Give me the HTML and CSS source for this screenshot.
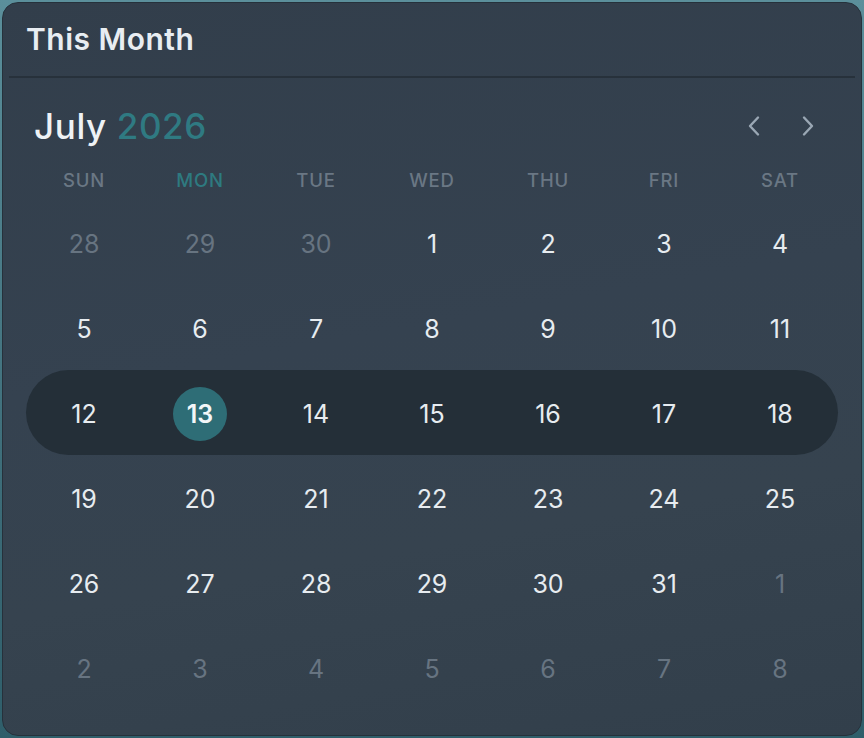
FILE: index.html
```html
<!DOCTYPE html>
<html lang="en">
<head>
<meta charset="utf-8">
<title>This Month</title>
<link rel="stylesheet" href="styles.css">
</head>
<body>
<div class="card">
  <header class="card-head">
    <h1 class="card-title">This Month</h1>
  </header>
  <div class="divider"></div>
  <section class="cal">
    <div class="cal-top">
      <h2 class="month">July <span class="year">2026</span></h2>
      <div class="nav">
        <button class="nav-btn" aria-label="Previous month">
          <svg width="18" height="22" viewBox="0 0 18 22"><path d="M13 2.5 L5 11 L13 19.5" fill="none" stroke="currentColor" stroke-width="2.4" stroke-linecap="round" stroke-linejoin="round"/></svg>
        </button>
        <button class="nav-btn" aria-label="Next month">
          <svg width="18" height="22" viewBox="0 0 18 22"><path d="M5 2.5 L13 11 L5 19.5" fill="none" stroke="currentColor" stroke-width="2.4" stroke-linecap="round" stroke-linejoin="round"/></svg>
        </button>
      </div>
    </div>
    <div class="weekdays">
      <span>SUN</span><span class="wd-active">MON</span><span>TUE</span><span>WED</span><span>THU</span><span>FRI</span><span>SAT</span>
    </div>
    <div class="week">
      <span class="day muted">28</span><span class="day muted">29</span><span class="day muted">30</span><span class="day">1</span><span class="day">2</span><span class="day">3</span><span class="day">4</span>
    </div>
    <div class="week">
      <span class="day">5</span><span class="day">6</span><span class="day">7</span><span class="day">8</span><span class="day">9</span><span class="day">10</span><span class="day">11</span>
    </div>
    <div class="week current">
      <span class="day">12</span><span class="day"><span class="today">13</span></span><span class="day">14</span><span class="day">15</span><span class="day">16</span><span class="day">17</span><span class="day">18</span>
    </div>
    <div class="week">
      <span class="day">19</span><span class="day">20</span><span class="day">21</span><span class="day">22</span><span class="day">23</span><span class="day">24</span><span class="day">25</span>
    </div>
    <div class="week">
      <span class="day">26</span><span class="day">27</span><span class="day">28</span><span class="day">29</span><span class="day">30</span><span class="day">31</span><span class="day muted">1</span>
    </div>
    <div class="week">
      <span class="day muted">2</span><span class="day muted">3</span><span class="day muted">4</span><span class="day muted">5</span><span class="day muted">6</span><span class="day muted">7</span><span class="day muted">8</span>
    </div>
  </section>
</div>
</body>
</html>
```

FILE: styles.css
```css
* { box-sizing: border-box; }

html, body {
  margin: 0;
  padding: 0;
}

body {
  width: 864px;
  height: 738px;
  background: linear-gradient(180deg, #5b8f9b 0%, #3f6f7b 60%, #2f5e6a 100%);
  font-family: "Inter", "DejaVu Sans", sans-serif;
  padding: 2px;
}

.card {
  width: 860px;
  height: 734px;
  border-radius: 16px;
  background: linear-gradient(170deg, #323e4b 0%, #354250 45%, #36434f 70%, #323f4b 100%);
  border: 1px solid #26313b;
  overflow: hidden;
}

.card-head {
  height: 73px;
  display: flex;
  align-items: center;
  padding: 0 23px 2px 23px;
}

.card-title {
  margin: 0;
  font-size: 30px;
  font-weight: 600;
  color: #e8edf2;
  letter-spacing: 0.5px;
}

.divider {
  height: 2px;
  background: #27313b;
  margin: 0 6px 0 6px;
}

.cal {
  padding: 22px 23px 0 23px;
}

.cal-top {
  height: 52px;
  display: flex;
  align-items: center;
  justify-content: space-between;
  padding: 0 9px 0 8px;
  margin-bottom: 8px;
}

.month {
  margin: 0;
  font-size: 35px;
  font-weight: 500;
  color: #eef2f5;
  letter-spacing: 0.6px;
}

.year {
  color: #2f7a82;
}

.nav {
  display: flex;
  gap: 36px;
  padding-right: 12px;
}

.nav-btn {
  background: none;
  border: 0;
  padding: 0;
  color: #9aa7b4;
  display: flex;
  align-items: center;
  justify-content: center;
  width: 18px;
  height: 22px;
}

.weekdays {
  display: grid;
  grid-template-columns: repeat(7, 116px);
  height: 40px;
  align-items: center;
}

.weekdays span {
  text-align: center;
  font-size: 18.5px;
  font-weight: 500;
  color: #6a7784;
  letter-spacing: 0.8px;
}

.weekdays .wd-active {
  color: #2e7a80;
}

.week {
  display: grid;
  grid-template-columns: repeat(7, 116px);
  height: 85px;
  align-items: center;
  padding-top: 2px;
}

.week.current {
  background: #242f38;
  border-radius: 43px;
}

.day {
  display: flex;
  align-items: center;
  justify-content: center;
  font-size: 25px;
  font-weight: 400;
  color: #e7ecf0;
}

.day.muted {
  color: #677481;
}

.today {
  width: 54px;
  height: 54px;
  border-radius: 50%;
  background: #2e6d76;
  display: flex;
  align-items: center;
  justify-content: center;
  font-weight: 600;
  color: #f2f6f8;
}
```
